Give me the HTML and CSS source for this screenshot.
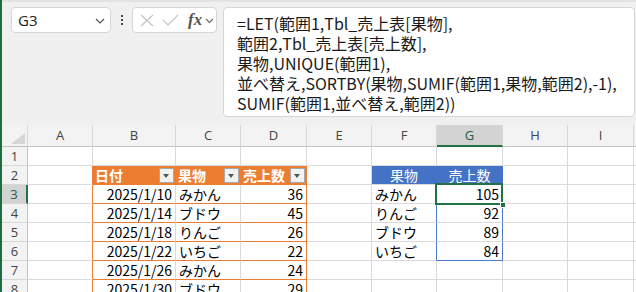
FILE: index.html
```html
<!DOCTYPE html>
<html lang="ja">
<head>
<meta charset="utf-8">
<link rel="stylesheet" href="styles.css">
</head>
<body>
<div class="app">
  <div class="fbar">
    <div class="namebox"><span class="nb-text">G3</span>
      <svg class="chev" width="10" height="6" viewBox="0 0 10 6"><path d="M1 1 L5 5 L9 1" fill="none" stroke="#555" stroke-width="1.2"/></svg>
    </div>
    <div class="dots"><i></i><i></i><i></i></div>
    <div class="fxbox">
      <svg class="ico" width="14" height="13" viewBox="0 0 14 13"><path d="M1 1 L13 12 M13 1 L1 12" stroke="#c4c4c4" stroke-width="1.2" fill="none"/></svg>
      <svg class="ico" width="17" height="12" viewBox="0 0 17 12"><path d="M1 6 L6 11 L16 1" stroke="#c4c4c4" stroke-width="1.2" fill="none"/></svg>
      <span class="fx">fx</span>
      <svg class="chev2" width="9" height="6" viewBox="0 0 9 6"><path d="M1 1 L4.5 4.5 L8 1" fill="none" stroke="#666" stroke-width="1.1"/></svg>
    </div>
    <div class="formula">
      <div>=LET(範囲1,Tbl_売上表[果物],</div>
      <div>範囲2,Tbl_売上表[売上数],</div>
      <div>果物,UNIQUE(範囲1),</div>
      <div>並べ替え,SORTBY(果物,SUMIF(範囲1,果物,範囲2),-1),</div>
      <div>SUMIF(範囲1,並べ替え,範囲2))</div>
    </div>
  </div>
  <div class="sheet">
    <div class="grid">
      <!-- header row -->
      <div class="corner"><span class="tri"></span></div>
      <div class="ch">A</div><div class="ch">B</div><div class="ch">C</div><div class="ch">D</div><div class="ch">E</div><div class="ch">F</div><div class="ch sel-ch">G</div><div class="ch">H</div><div class="ch">I</div><div class="ch"></div>
      <!-- row 1 -->
      <div class="rh">1</div>
      <div class="c"></div><div class="c"></div><div class="c"></div><div class="c"></div><div class="c"></div><div class="c"></div><div class="c"></div><div class="c"></div><div class="c"></div><div class="c"></div>
      <!-- row 2 -->
      <div class="rh">2</div>
      <div class="c oleft"></div>
      <div class="c oh"><span>日付</span><span class="flt"></span></div>
      <div class="c oh"><span>果物</span><span class="flt"></span></div>
      <div class="c oh"><span>売上数</span><span class="flt"></span></div>
      <div class="c"></div>
      <div class="c bh">果物</div>
      <div class="c bh">売上数</div>
      <div class="c"></div><div class="c"></div><div class="c"></div>
      <!-- row 3 -->
      <div class="rh sel-rh">3</div>
      <div class="c oleft"></div>
      <div class="c ob r">2025/1/10</div><div class="c ob">みかん</div><div class="c ob oright r">36</div>
      <div class="c"></div>
      <div class="c sleft">みかん</div><div class="c sp r">105</div>
      <div class="c"></div><div class="c"></div><div class="c"></div>
      <!-- row 4 -->
      <div class="rh">4</div>
      <div class="c oleft"></div>
      <div class="c ob r">2025/1/14</div><div class="c ob">ブドウ</div><div class="c ob oright r">45</div>
      <div class="c"></div>
      <div class="c sleft">りんご</div><div class="c sp r">92</div>
      <div class="c"></div><div class="c"></div><div class="c"></div>
      <!-- row 5 -->
      <div class="rh">5</div>
      <div class="c oleft"></div>
      <div class="c ob r">2025/1/18</div><div class="c ob">りんご</div><div class="c ob oright r">26</div>
      <div class="c"></div>
      <div class="c sleft">ブドウ</div><div class="c sp r">89</div>
      <div class="c"></div><div class="c"></div><div class="c"></div>
      <!-- row 6 -->
      <div class="rh">6</div>
      <div class="c oleft"></div>
      <div class="c ob r">2025/1/22</div><div class="c ob">いちご</div><div class="c ob oright r">22</div>
      <div class="c"></div>
      <div class="c sleft">いちご</div><div class="c sp spb r">84</div>
      <div class="c"></div><div class="c"></div><div class="c"></div>
      <!-- row 7 -->
      <div class="rh">7</div>
      <div class="c oleft"></div>
      <div class="c ob r">2025/1/26</div><div class="c ob">みかん</div><div class="c ob oright r">24</div>
      <div class="c"></div>
      <div class="c"></div><div class="c"></div>
      <div class="c"></div><div class="c"></div><div class="c"></div>
      <!-- row 8 -->
      <div class="rh">8</div>
      <div class="c oleft"></div>
      <div class="c ob r">2025/1/30</div><div class="c ob">ブドウ</div><div class="c ob oright r">29</div>
      <div class="c"></div>
      <div class="c"></div><div class="c"></div>
      <div class="c"></div><div class="c"></div><div class="c"></div>
    </div>
    <div class="selection"><span class="handle"></span></div>
  </div>
</div>
</body>
</html>
```
FILE: styles.css
```css
* { box-sizing: border-box; }
html, body { margin: 0; padding: 0; }
body { width: 636px; height: 292px; overflow: hidden; background: #fff; }
.app {
  width: 636px; height: 292px; overflow: hidden;
  border-left: 2px solid #1f6e43;
  background: #f0f0f0;
  font-family: "Noto Sans CJK JP", "Noto Sans", sans-serif;
}
.fbar {
  height: 125px;
  display: flex;
  align-items: flex-start;
  padding: 5px 0 0 9px;
  border-top: 2px solid #e2e2e2;
}
.namebox {
  width: 100px; height: 26px;
  background: #fff;
  border: 1px solid #d6d6d6;
  border-radius: 4px;
  display: flex; align-items: center; justify-content: space-between;
  padding: 0 5px 0 6px;
}
.nb-text { font-family: "Open Sans", "Noto Sans", sans-serif; font-size: 15px; color: #222; line-height: 24px; }
.chev { margin-top: 2px; }
.dots {
  width: 21px; height: 26px;
  display: flex; flex-direction: column; align-items: center; justify-content: center; gap: 2px;
}
.dots i { display: block; width: 2px; height: 2px; background: #444; }
.fxbox {
  width: 85px; height: 26px;
  background: #fff;
  border: 1px solid #d6d6d6;
  border-radius: 4px;
  display: flex; align-items: center;
  padding-left: 7px;
  gap: 8px;
}
.fx {
  font-family: "Liberation Serif", serif;
  font-style: italic; font-weight: bold;
  font-size: 17px; color: #555; line-height: 20px;
  margin-left: 1px;
}
.chev2 { margin-left: -5px; margin-top: 2px; }
.formula {
  margin-left: 6px;
  width: 412px;
  height: 110px;
  background: #fff;
  border: 1px solid #d6d6d6;
  border-radius: 4px;
  padding: 5px 0 0 13px;
  font-size: 16px;
  line-height: 20px;
  color: #1a1a1a;
  white-space: nowrap;
}
.sheet { position: relative; }
.grid {
  display: grid;
  grid-template-columns: 26px 65px 83px 65px 66px 65px 65px 66px 65px 66px 10px;
  grid-template-rows: 22px repeat(8, 19px);
  background: #fff;
}
.corner, .ch {
  background: #f3f3f3;
  border-right: 1px solid #d8d8d8;
  border-bottom: 1px solid #c4c4c4;
  font-family: "Open Sans", "Noto Sans", sans-serif;
  font-size: 13px; color: #444;
  text-align: center; line-height: 21px;
}
.corner { position: relative; }
.tri {
  position: absolute; right: 2px; bottom: 2px;
  width: 0; height: 0;
  border-left: 14px solid transparent;
  border-bottom: 11px solid #d6d6d6;
}
.sel-ch { background: #d3d3d3; border-bottom: 2px solid #217346; color: #1f5d42; line-height: 20px; }
.rh {
  background: #f3f3f3;
  border-right: 1px solid #c4c4c4;
  border-bottom: 1px solid #d8d8d8;
  font-family: "Open Sans", "Noto Sans", sans-serif;
  font-size: 13px; color: #444;
  text-align: center; line-height: 18px;
}
.sel-rh { background: #d3d3d3; border-right: 2px solid #217346; color: #1f5d42; }
.c {
  border-right: 1px solid #dadada;
  border-bottom: 1px solid #dadada;
  font-size: 14px; line-height: 18px;
  padding: 0 3px;
  white-space: nowrap; overflow: hidden;
  color: #000;
}
.r { text-align: right; }
.oleft { border-right-color: #ed7d31; }
.oh {
  background: #ed7d31;
  border-right-color: #ed7d31;
  border-bottom-color: #ed7d31;
  color: #fff; font-weight: bold;
  display: flex; align-items: center; justify-content: space-between;
  padding: 0 1px 0 2px;
}
.flt {
  width: 15px; height: 15px;
  background: #f2f2f2;
  border: 1px solid #a8a8a8;
  position: relative;
}
.flt::after {
  content: ""; position: absolute; left: 3px; top: 5px;
  border-left: 3.5px solid transparent; border-right: 3.5px solid transparent;
  border-top: 4px solid #555;
}
.ob { border-bottom-color: #ed7d31; }
.oright { border-right-color: #ed7d31; }
.bh {
  background: #4472c4;
  border-right-color: #4472c4;
  color: #fff; text-align: center;
}
.sleft { border-right-color: #4a7bd0; }
.sp { border-right-color: #4a7bd0; }
.spb { border-bottom-color: #4a7bd0; }
.selection {
  position: absolute;
  left: 433px; top: 58px;
  width: 68px; height: 22px;
  border: 2px solid #217346;
}
.handle {
  position: absolute; right: -5px; bottom: -5px;
  width: 6px; height: 6px;
  background: #217346;
  border: 1px solid #fff;
}
```
